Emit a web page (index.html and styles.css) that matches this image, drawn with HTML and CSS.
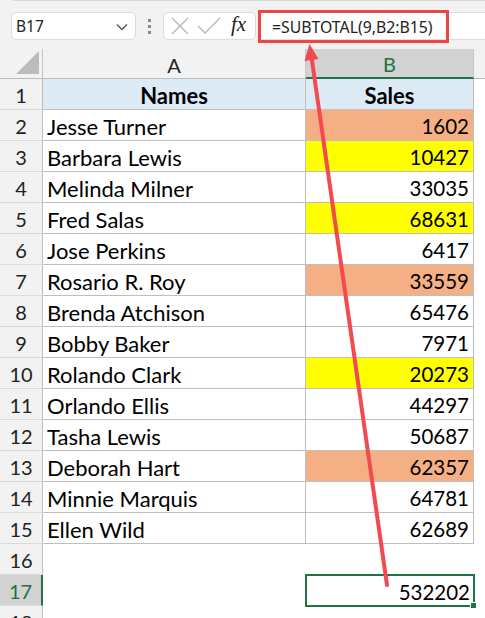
FILE: index.html
```html
<!DOCTYPE html>
<html>
<head>
<meta charset="utf-8">
<link rel="stylesheet" href="styles.css">
</head>
<body>
<div class="app">
  <div class="edge"></div>
  <div class="toolbar">
    <div class="namebox">
      <span class="ref">B17</span>
      <svg class="chev" width="12" height="8" viewBox="0 0 12 8"><path d="M1 1.5 L6 6.5 L11 1.5" fill="none" stroke="#555" stroke-width="1.3"/></svg>
    </div>
    <div class="dots"><i></i><i></i><i></i></div>
    <div class="fbtns">
      <svg width="20" height="20" viewBox="0 0 20 20"><path d="M2 2 L18 18 M18 2 L2 18" stroke="#b9b9b9" stroke-width="1.4" fill="none"/></svg>
      <svg width="24" height="20" viewBox="0 0 24 20"><path d="M1 10 L8 17 L23 2" stroke="#b9b9b9" stroke-width="1.4" fill="none"/></svg>
      <span class="fx">fx</span>
    </div>
    <div class="field">
      <div class="redbox"><span class="ftext">=SUBTOTAL(9,B2:B15)</span></div>
    </div>
  </div>
  <div class="grid">
    <div class="corner"><svg width="25" height="25" viewBox="0 0 25 25"><polygon points="24,1 24,24 1,24" fill="#bcbcbc"/></svg></div>
    <div class="ch">A</div>
    <div class="ch sel">B</div>
    <div class="ch last"></div>

    <div class="rh">1</div><div class="c a hd">Names</div><div class="c b hd">Sales</div><div class="x"></div>
    <div class="rh">2</div><div class="c a">Jesse Turner</div><div class="c b n salmon">1602</div><div class="x"></div>
    <div class="rh">3</div><div class="c a">Barbara Lewis</div><div class="c b n yellow">10427</div><div class="x"></div>
    <div class="rh">4</div><div class="c a">Melinda Milner</div><div class="c b n">33035</div><div class="x"></div>
    <div class="rh">5</div><div class="c a">Fred Salas</div><div class="c b n yellow">68631</div><div class="x"></div>
    <div class="rh">6</div><div class="c a">Jose Perkins</div><div class="c b n">6417</div><div class="x"></div>
    <div class="rh">7</div><div class="c a">Rosario R. Roy</div><div class="c b n salmon">33559</div><div class="x"></div>
    <div class="rh">8</div><div class="c a">Brenda Atchison</div><div class="c b n">65476</div><div class="x"></div>
    <div class="rh">9</div><div class="c a">Bobby Baker</div><div class="c b n">7971</div><div class="x"></div>
    <div class="rh">10</div><div class="c a">Rolando Clark</div><div class="c b n yellow">20273</div><div class="x"></div>
    <div class="rh">11</div><div class="c a">Orlando Ellis</div><div class="c b n">44297</div><div class="x"></div>
    <div class="rh">12</div><div class="c a">Tasha Lewis</div><div class="c b n">50687</div><div class="x"></div>
    <div class="rh">13</div><div class="c a">Deborah Hart</div><div class="c b n salmon">62357</div><div class="x"></div>
    <div class="rh">14</div><div class="c a">Minnie Marquis</div><div class="c b n">64781</div><div class="x"></div>
    <div class="rh">15</div><div class="c a">Ellen Wild</div><div class="c b n">62689</div><div class="x"></div>
    <div class="rh">16</div><div class="e"></div><div class="e"></div><div class="x"></div>
    <div class="rh rsel">17</div><div class="e"></div><div class="e n active">532202</div><div class="x"></div>
    <div class="rh">18</div><div class="e"></div><div class="e"></div><div class="x"></div>
  </div>
  <svg class="arrow" width="485" height="618" viewBox="0 0 485 618">
    <line x1="387" y1="585" x2="311.5" y2="57" stroke="#f24a4e" stroke-width="4" stroke-linecap="round"/>
    <polygon points="309.5,44 318.5,59 304.5,61" fill="#f24a4e"/>
  </svg>
</div>
</body>
</html>
```
FILE: styles.css
```css
* { box-sizing: border-box; }
html, body { margin: 0; padding: 0; }
body { width: 485px; height: 618px; overflow: hidden; background: #fff; font-family: "Lato", "Liberation Sans", sans-serif; }
.app { position: relative; width: 485px; height: 618px; overflow: hidden; background: #f2f2f2; }
.edge { height: 2px; margin-left: 13px; border-top: 1px solid #d8d8d8; }
.toolbar { height: 47px; display: flex; align-items: flex-start; }
.namebox { margin-left: 11px; margin-top: 10px; width: 125px; height: 28px; background: #fff; border: 1px solid #dcdcdc; border-radius: 5px; display: flex; align-items: center; justify-content: space-between; padding: 0 7px 0 4px; }
.ref { font-family: "Noto Sans", sans-serif; font-size: 15.5px; color: #222; }
.chev { margin-top: 1px; }
.dots { width: 27px; height: 28px; margin-top: 10px; display: flex; flex-direction: column; align-items: center; justify-content: center; gap: 3px; }
.dots i { display: block; width: 3px; height: 3px; background: #8a8a8a; }
.fbtns { margin-top: 10px; width: 93px; height: 28px; background: #fff; border: 1px solid #dcdcdc; border-radius: 5px; display: flex; align-items: center; padding-left: 6px; gap: 7px; }
.fx { font-family: "Liberation Serif", serif; font-style: italic; font-size: 21px; color: #222; margin-left: 3px; margin-top: -3px; }
.field { flex: 1; margin-left: 2px; margin-top: 10px; height: 28px; background: #fff; border: 1px solid #dcdcdc; border-right: none; border-radius: 5px 0 0 5px; }
.redbox { width: 191px; height: 33px; margin: -3px 0 0 -1px; border: 3px solid #f04545; display: flex; align-items: center; padding-left: 11px; }
.ftext { font-family: "Noto Sans", sans-serif; font-size: 15.8px; color: #222; }
.grid { display: grid; grid-template-columns: 43px 263px 168px 11px; grid-template-rows: 30px repeat(18, 31px); }
.corner { border-right: 1px solid #c6c6c6; border-bottom: 1px solid #bcbcbc; display: flex; align-items: flex-end; justify-content: flex-end; padding: 0 2px 3px 0; }
.ch { font-size: 20px; color: #222; display: flex; align-items: center; justify-content: center; border-right: 1px solid #c6c6c6; border-bottom: 1px solid #bcbcbc; padding-top: 2px; }
.ch.sel { background: #d2d2d2; color: #217346; border-bottom: 2px solid #217346; }
.ch.last { border-right: none; }
.rh { background: #f2f2f2; font-size: 20px; color: #222; display: flex; align-items: center; justify-content: center; border-right: 1px solid #bdbdbd; border-bottom: 1px solid #dadada; padding-top: 2px; }
.rh.rsel { background: #d2d2d2; color: #217346; border-right: 2px solid #217346; }
.c { background: #fff; font-size: 20.5px; color: #000; border-right: 1px solid #bfbfbf; border-bottom: 1px solid #bfbfbf; display: flex; align-items: center; padding: 2px 4px 0 4px; }
.c.a { font-size: 22px; }
.e { background: #fff; font-size: 20.5px; color: #000; display: flex; align-items: center; padding: 2px 4px 0 4px; }
.x { background: #fff; }
.n { justify-content: flex-end; }
.hd { background: #ddebf7; font-weight: 700; justify-content: center; }
.c.hd { font-size: 22px; }
.salmon { background: #f4b084; }
.yellow { background: #ffff00; }
.active { position: relative; box-shadow: 0 0 0 1px #217346, inset 0 0 0 1px #217346; }
.active::after { content: ""; position: absolute; right: -3px; bottom: -3px; width: 5px; height: 5px; background: #217346; border: 1px solid #fff; }
.arrow { position: absolute; left: 0; top: 0; pointer-events: none; }
```
